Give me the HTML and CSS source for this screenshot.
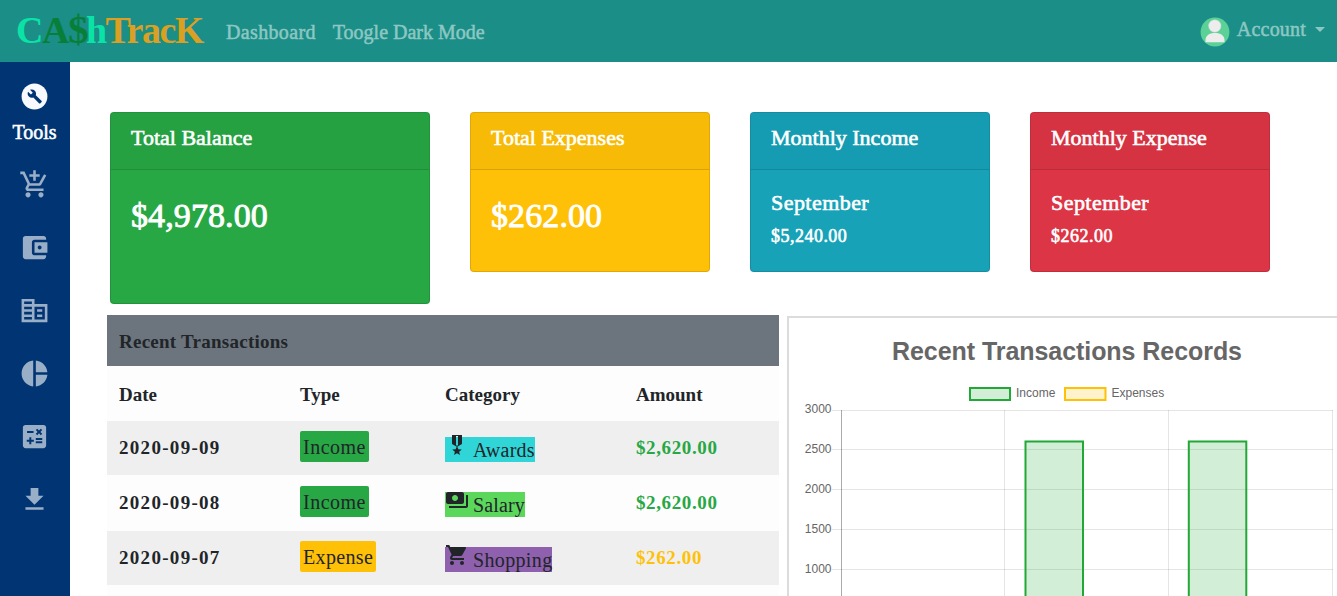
FILE: index.html
```html
<!DOCTYPE html>
<html lang="en">
<head>
<meta charset="utf-8">
<title>CA$hTracK</title>
<link rel="stylesheet" href="styles.css">
</head>
<body>
<header class="navbar">
  <a class="brand"><span class="mint">C</span><span class="green">A<span class="dollar">$</span></span><span class="mint">h</span><span class="gold">TracK</span></a>
  <nav class="links"><a class="wide">Dashboard</a><a>Toogle Dark Mode</a></nav>
  <div class="account">
    <svg class="avatar" viewBox="0 0 30 30"><circle cx="15" cy="15" r="14.4" fill="#5bd197"/><path d="M5.500 25.200v-2c0-4.500 3.500-7.200 9.500-7.200s9.500 2.700 9.500 7.200v2z" fill="#ededed"/><circle cx="14.800" cy="9" r="6.200" fill="#ededed" stroke="#c9d9cf" stroke-width=".5"/></svg>
    <span class="account-name">Account</span><span class="caret"></span>
  </div>
</header>
<div class="layout">
  <aside class="sidebar">
    <div class="tools">
      <svg class="icon" viewBox="0 0 24 24"><circle cx="12" cy="12" r="10" fill="#f8f9fc"/><path transform="translate(6.200 6) scale(.5)" fill="#003473" d="M22.700 19l-9.100-9.100c.9-2.300.4-5-1.500-6.900-2-2-5-2.400-7.400-1.300L9 6 6 9 1.600 4.700C.4 7.100.9 10.100 2.900 12.100c1.900 1.900 4.600 2.400 6.900 1.500l9.100 9.100c.4.4 1 .4 1.400 0l2.300-2.300c.5-.4.5-1.100.1-1.400z"/></svg>
      <span>Tools</span>
    </div>
    <svg class="icon" viewBox="0 0 24 24"><path d="M11 9h2V6h3V4h-3V1h-2v3H8v2h3v3zm-4 9c-1.100 0-1.990.9-1.990 2S5.900 22 7 22s2-.9 2-2-.9-2-2-2zm10 0c-1.100 0-1.990.9-1.990 2s.89 2 1.990 2 2-.9 2-2-.9-2-2-2zm-9.830-3.250l.03-.12.9-1.630h7.450c.75 0 1.410-.41 1.750-1.030l3.860-7.010L19.420 4h-.01l-1.100 2-2.760 5H8.530l-.13-.27L6.160 6l-.95-2-.94-2H1v2h2l3.600 7.590-1.350 2.450c-.16.28-.25.61-.25.96 0 1.100.9 2 2 2h12v-2H7.420c-.13 0-.25-.11-.25-.25z"/></svg>
    <svg class="icon" viewBox="0 0 24 24"><path d="M21 18v1c0 1.100-.9 2-2 2H5c-1.110 0-2-.9-2-2V5c0-1.100.89-2 2-2h14c1.100 0 2 .9 2 2v1h-9c-1.110 0-2 .9-2 2v8c0 1.100.89 2 2 2h9zm-9-2h10V8H12v8zm4-2.500c-.83 0-1.500-.67-1.500-1.500s.67-1.500 1.500-1.500 1.500.67 1.500 1.500-.67 1.500-1.500 1.500z"/></svg>
    <svg class="icon" viewBox="0 0 24 24"><path d="M12 7V3H2v18h20V7H12zM10 19H4v-2h6v2zm0-4H4v-2h6v2zm0-4H4V9h6v2zm0-4H4V5h6v2zm10 12h-8V9h8v10zm-2-8h-4v2h4v-2zm0 4h-4v2h4v-2z"/></svg>
    <svg class="icon" viewBox="0 0 24 24"><path d="M11 2v20c-5.070-.5-9-4.790-9-10s3.930-9.500 9-10zm2.030 0v8.990H22c-.47-4.740-4.240-8.520-8.970-8.990zm0 11.010V22c4.740-.47 8.500-4.250 8.970-8.990h-8.970z"/></svg>
    <svg class="icon" viewBox="0 0 24 24"><path d="M19 3H5c-1.100 0-2 .9-2 2v14c0 1.100.9 2 2 2h14c1.100 0 2-.9 2-2V5c0-1.100-.9-2-2-2zm-5.970 4.060L14.090 6l1.410 1.410L16.910 6l1.060 1.060-1.410 1.410 1.410 1.410-1.060 1.060-1.410-1.400-1.410 1.410-1.060-1.060 1.410-1.410-1.410-1.420zm-6.780.66h5v1.500h-5v-1.500zM11.500 16h-2v2H8v-2H6v-1.500h2v-2h1.500v2h2V16zm6.500 1.250h-5v-1.500h5v1.500zm0-2.500h-5v-1.500h5v1.500z"/></svg>
    <svg class="icon" viewBox="0 0 24 24"><path d="M19 9h-4V3H9v6H5l7 7 7-7zM5 18v2h14v-2H5z"/></svg>
  </aside>
  <main class="main">
    <section class="cards">
      <article class="card balance"><h2>Total Balance</h2><p class="big">$4,978.00</p></article>
      <article class="card expenses"><h2>Total Expenses</h2><p class="big">$262.00</p></article>
      <article class="card income"><h2>Monthly Income</h2><p class="month">September</p><p class="small">$5,240.00</p></article>
      <article class="card expense"><h2>Monthly Expense</h2><p class="month">September</p><p class="small">$262.00</p></article>
    </section>
    <section class="panels">
      <div class="table">
        <div class="title">Recent Transactions</div>
        <div class="row head"><span>Date</span><span>Type</span><span>Category</span><span>Amount</span></div>
        <div class="row odd">
          <span class="date">2020-09-09</span><span class="badge in">Income</span>
          <span class="tag awards"><svg viewBox="0 0 24 24"><path d="M17 10.430V2H7v8.430c0 .35.18.68.49.86l4.180 2.510-.99 2.340-3.410.29 2.590 2.240L9.070 22 12 20.230 14.930 22l-.78-3.330 2.590-2.240-3.410-.29-.99-2.340 4.180-2.510c.3-.18.48-.5.48-.86zm-4 1.800l-1 .6-1-.6V3h2v9.230z"/></svg>Awards</span>
          <span class="amount plus">$2,620.00</span>
        </div>
        <div class="row even">
          <span class="date">2020-09-08</span><span class="badge in">Income</span>
          <span class="tag salary"><svg viewBox="0 0 24 24"><path d="M19 14V6c0-1.100-.9-2-2-2H3c-1.100 0-2 .9-2 2v8c0 1.100.9 2 2 2h14c1.100 0 2-.9 2-2zm-9-1c-1.660 0-3-1.340-3-3s1.340-3 3-3 3 1.340 3 3-1.340 3-3 3zm13-6v11c0 1.100-.9 2-2 2H4v-2h17V7h2z"/></svg>Salary</span>
          <span class="amount plus">$2,620.00</span>
        </div>
        <div class="row odd">
          <span class="date">2020-09-07</span><span class="badge out">Expense</span>
          <span class="tag shopping"><svg viewBox="0 0 24 24"><path d="M7 18c-1.100 0-1.990.9-1.990 2S5.900 22 7 22s2-.9 2-2-.9-2-2-2zM1 2v2h2l3.600 7.590-1.350 2.450c-.16.28-.25.61-.25.96 0 1.100.9 2 2 2h12v-2H7.420c-.14 0-.25-.11-.25-.25l.03-.12.9-1.630h7.450c.75 0 1.410-.41 1.750-1.030l3.580-6.490c.08-.14.12-.31.12-.48 0-.55-.45-1-1-1H5.210l-.94-2H1zm16 16c-1.100 0-1.990.9-1.990 2s.89 2 1.990 2 2-.9 2-2-.9-2-2-2z"/></svg>Shopping</span>
          <span class="amount minus">$262.00</span>
        </div>
      </div>
      <div class="chart">
        <svg width="548" height="278" viewBox="789 318 548 278">
          <text class="chart-title" x="1067" y="360" text-anchor="middle" textLength="350">Recent Transactions Records</text>
          <rect class="bar-in" x="970" y="388" width="40" height="12"/>
          <text class="label" x="1016" y="397">Income</text>
          <rect class="bar-out" x="1065" y="388" width="40.500" height="12"/>
          <text class="label" x="1111.500" y="397">Expenses</text>
          <g class="label" text-anchor="end">
            <text x="831.500" y="413">3000</text><text x="831.500" y="453">2500</text><text x="831.500" y="493">2000</text><text x="831.500" y="533">1500</text><text x="831.500" y="573">1000</text>
          </g>
          <path class="grid" d="M832 410.500H1333M832 449.500H1333M832 489.500H1333M832 529.500H1333M832 569.500H1333M1004.500 410V596M1168.500 410V596M1332.500 410V596"/>
          <path class="axis" d="M841.500 410V596"/>
          <rect class="bar-in" x="1025.500" y="441.500" width="57.500" height="170"/>
          <rect class="bar-in" x="1188.800" y="441.500" width="57.500" height="170"/>
        </svg>
      </div>
    </section>
  </main>
</div>
</body>
</html>
```

FILE: styles.css
```css
* { box-sizing: border-box; }
body {
  margin: 0;
  height: 596px;
  overflow: hidden;
  background: #fff;
  color: #212529;
  font: 20px/30px "Liberation Serif", serif;
}
h2, p { margin: 0; font-weight: 400; }

.navbar {
  display: flex;
  align-items: flex-start;
  height: 62px;
  padding: 0 12px 0 16px;
  background: #1b8e87;
  color: #8dc7c3;
  -webkit-text-stroke: .5px;
}
.brand {
  width: 210px;
  font-size: 38px;
  font-weight: 700;
  line-height: 61px;
  letter-spacing: -1.5px;
  -webkit-text-stroke: 0;
}
.mint { color: #0be3a6; }
.green { color: #087f38; }
.gold { color: #daa023; }
.dollar { font-size: 41px; line-height: 1; letter-spacing: -2.5px; }
.links { display: flex; gap: 17px; line-height: 64px; }
.wide { letter-spacing: .35px; }
.account { display: flex; align-items: center; margin-left: auto; height: 62px; }
.avatar { width: 30px; height: 30px; margin-top: 2px; }
.account-name { margin: -4px 0 0 7px; letter-spacing: .2px; }
.caret {
  margin: -4px 0 0 9px;
  border: 5px solid transparent;
  border-top-color: #8dc7c3;
  border-bottom: 0;
}

.layout { display: flex; height: 534px; }
.sidebar {
  display: flex;
  flex: none;
  flex-direction: column;
  align-items: center;
  gap: 32px;
  width: 70px;
  padding: 19px 1px 0 0;
  background: #003473;
  fill: #99aec7;
}
.icon { display: block; flex: none; width: 31px; height: 31px; }
.tools {
  display: flex;
  flex-direction: column;
  align-items: center;
  gap: 5px;
  height: 56px;
  color: #fff;
  -webkit-text-stroke: .55px;
}

.main { flex: none; width: 1267px; padding-top: 50px; }
.cards {
  display: flex;
  align-items: flex-start;
  gap: 40px;
  height: 203px;
  padding-left: 40px;
}
.card {
  width: 240px;
  height: 160px;
  overflow: hidden;
  border: 1px solid rgba(0, 0, 0, .125);
  border-radius: 4px;
  color: #fff;
  -webkit-text-stroke: .6px;
}
.card h2 {
  height: 57px;
  padding: 10px 20px;
  border-bottom: 1px solid rgba(0, 0, 0, .125);
  background: rgba(0, 0, 0, .03);
  font-size: 22px;
  line-height: 30px;
}
.card p { padding-left: 20px; }
.balance { width: 320px; height: 192px; background: #28a745; }
.expenses { background: #ffc107; }
.income { background: #17a2b8; }
.expense { background: #dc3545; }
.card .big { padding-top: 26px; font-size: 34px; line-height: 40px; letter-spacing: .1px; -webkit-text-stroke: .9px; }
.month { padding-top: 17px; font-size: 22px; line-height: 32px; letter-spacing: .45px; }
.small { padding-top: 1px; font-size: 18px; line-height: 32px; letter-spacing: .48px; }

.panels { display: flex; gap: 8px; padding-left: 37px; }
.table { flex: none; width: 672px; background: #fdfdfd; }
.title {
  padding: 0 12px;
  height: 51px;
  background: #6c757d;
  font-size: 19px;
  font-weight: 700;
  line-height: 53px;
  letter-spacing: .25px;
}
.row {
  display: grid;
  grid-template-columns: 181px 145px 191px 143px;
  align-items: start;
  justify-items: start;
  padding-left: 12px;
}
.head { height: 55px; font-size: 19px; font-weight: 700; line-height: 57px; }
.odd { height: 54px; padding-top: 10px; background: #efefef; }
.even { height: 56px; padding-top: 11px; }
.date { font-size: 19px; font-weight: 700; line-height: 33px; letter-spacing: 1.3px; }
.badge { height: 31px; padding: 0 3px; border-radius: 2px; line-height: 32px; letter-spacing: .5px; }
.in { background: #28a745; }
.out { background: #ffc107; letter-spacing: .35px; }
.tag { display: flex; gap: 4px; height: 25px; margin-top: 6px; line-height: 27px; letter-spacing: .15px; }
.tag svg { width: 24px; height: 24px; margin-top: -4px; fill: #212529; }
.awards { background: #30d5d8; letter-spacing: .25px; }
.salary { background: #5bd75b; }
.shopping { background: #8e60ad; letter-spacing: .35px; }
.amount { font-size: 19px; font-weight: 700; line-height: 34px; letter-spacing: .62px; }
.plus { color: #28a745; }
.minus { color: #ffc107; }

.chart {
  flex: none;
  width: 560px;
  height: 290px;
  margin-top: 1px;
  border: 2px solid #dcdcdc;
}
.chart svg { display: block; }
.chart text { font-family: "Liberation Sans", sans-serif; fill: #666; }
.chart-title { font-size: 25px; font-weight: 700; }
.label { font-size: 12px; }
.grid, .axis { fill: none; stroke: rgba(0, 0, 0, .1); }
.axis { stroke: rgba(0, 0, 0, .33); }
.bar-in { fill: rgba(31, 168, 55, .2); stroke: #22a836; stroke-width: 2; }
.bar-out { fill: rgba(255, 193, 7, .2); stroke: #ffc107; stroke-width: 2; }
```
